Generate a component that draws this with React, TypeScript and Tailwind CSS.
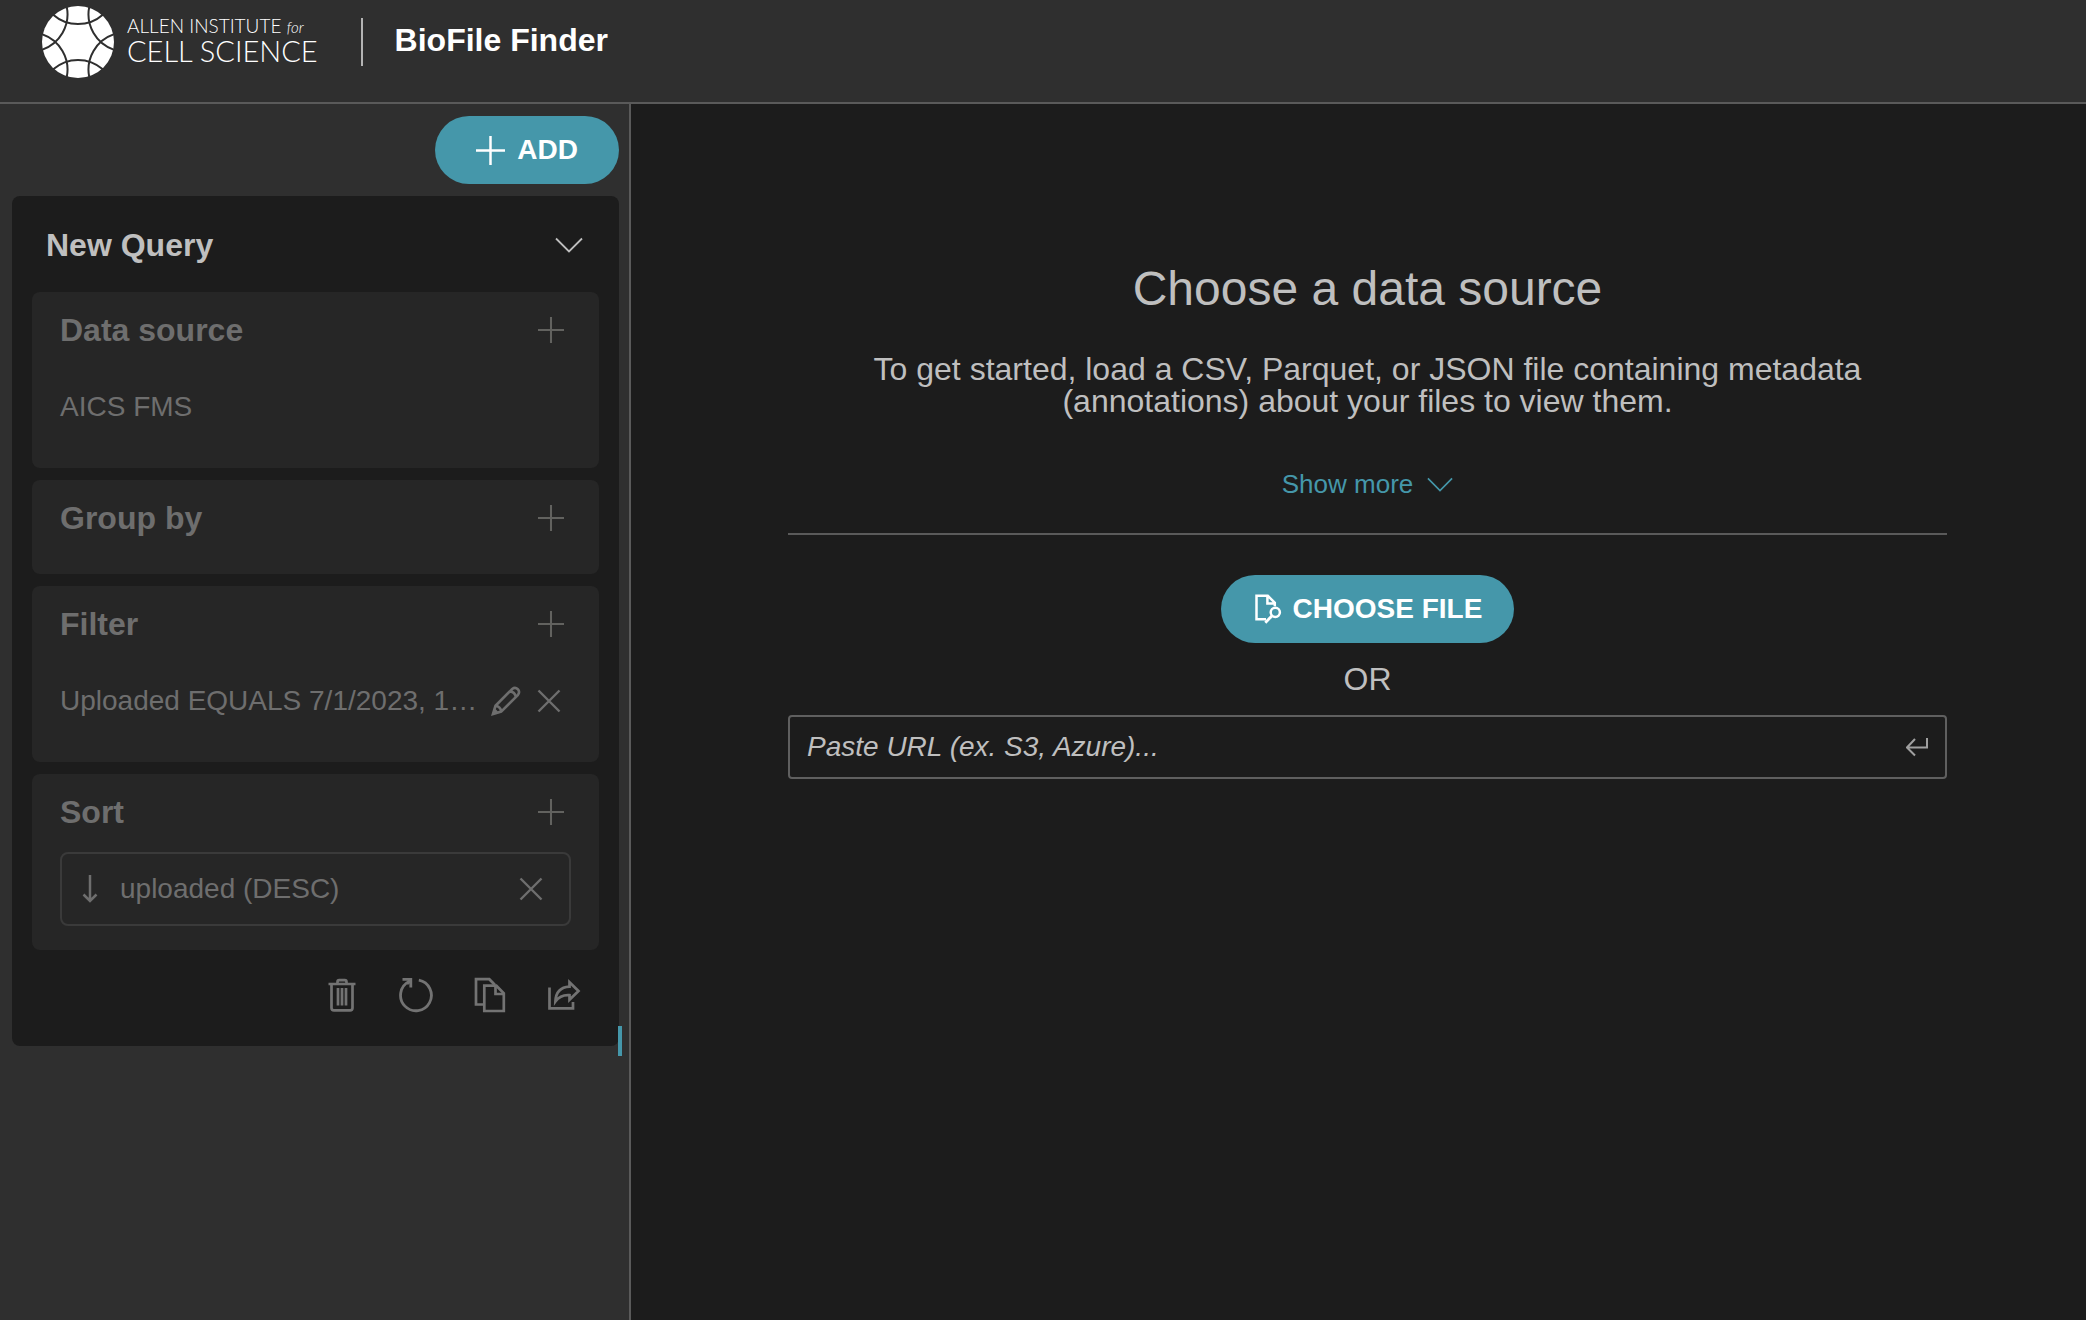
import React from "react";

type IconProps = { className?: string };

function Plus({ className }: IconProps) {
  return (
    <svg viewBox="0 0 28 28" className={className} fill="none" stroke="currentColor" aria-hidden="true">
      <path d="M14 0V28M0 14H28" />
    </svg>
  );
}

function Chevron({ className }: IconProps) {
  return (
    <svg viewBox="0 0 28 16" className={className} fill="none" stroke="currentColor" strokeWidth="1.8" aria-hidden="true">
      <path d="M1 1.5L14 14.5L27 1.5" />
    </svg>
  );
}

function Cross({ className }: IconProps) {
  return (
    <svg viewBox="0 0 24 24" className={className} fill="none" stroke="currentColor" strokeWidth="2.4" aria-hidden="true">
      <path d="M1.5 1.5L22.5 22.5M22.5 1.5L1.5 22.5" />
    </svg>
  );
}

function Pencil({ className }: IconProps) {
  return (
    <svg viewBox="0 0 30 30" className={className} fill="none" stroke="currentColor" strokeWidth="2.6" aria-hidden="true">
      <path d="M2 28L4.5 19.8L21.2 3Q24.2 0.8 26.8 3.2Q29.2 5.8 27 8.8L10.2 25.6L2 28ZM4.5 19.8Q9.5 20.5 10.2 25.6M19.2 5.4Q23.8 6 24.8 10.8" />
      <path d="M1 29L2.8 22.8Q6.6 23.6 7.2 27.2Z" fill="currentColor" stroke="none" />
    </svg>
  );
}

function ArrowDown({ className }: IconProps) {
  return (
    <svg viewBox="0 0 16 28" className={className} fill="none" stroke="currentColor" strokeWidth="2.5" aria-hidden="true">
      <path d="M8 0V26M1.5 19.5L8 26L14.5 19.5" />
    </svg>
  );
}

function Trash({ className }: IconProps) {
  return (
    <svg viewBox="0 0 28 34" className={className} fill="none" stroke="currentColor" strokeWidth="2.7" aria-hidden="true">
      <path d="M0.5 6H27.5M9.5 6V4Q9.5 2.2 11.2 2.2H16.8Q18.5 2.2 18.5 4V6M3.5 6V30Q3.5 32.3 6 32.3H22Q24.5 32.3 24.5 30V6M10 10V27.5M14 10V27.5M18 10V27.5" />
    </svg>
  );
}

function Refresh({ className }: IconProps) {
  return (
    <svg viewBox="0 0 36 36" className={className} fill="none" stroke="currentColor" strokeWidth="2.8" aria-hidden="true">
      <path d="M21.8 3.2A15.4 15.4 0 1 1 12 4.6" />
      <path d="M5.5 2.4H13.8V10.5M13.8 2.4L10 7" />
    </svg>
  );
}

function Copy({ className }: IconProps) {
  return (
    <svg viewBox="0 0 32 36" className={className} fill="none" stroke="currentColor" strokeWidth="2.7" aria-hidden="true">
      <path d="M10.3 27.5H2V2.2H15.3L21 8" />
      <path d="M10.3 8.7H22.3L29.8 16.2V34H10.3Z" />
      <path d="M21.5 8V17H30.5" />
    </svg>
  );
}

function Share({ className }: IconProps) {
  return (
    <svg viewBox="0 0 34 34" className={className} fill="none" stroke="currentColor" strokeWidth="2.7" aria-hidden="true">
      <path d="M2.5 9.5V30.3H26V24" />
      <path d="M22.5 4.2L31.5 13L22.5 21.8V17.2Q13.5 16.5 8.4 23.5Q9 9.5 22.5 8.7Z" />
    </svg>
  );
}

function FileSearch({ className }: IconProps) {
  return (
    <svg viewBox="0 0 27 30" className={className} fill="none" stroke="currentColor" strokeWidth="2.5" aria-hidden="true">
      <path d="M11 25.3H1.5V1.7H12.8L19.8 8.7V12.3M12.4 1.7V9.4H20.5" />
      <circle cx="20.3" cy="18.3" r="4.6" />
      <path d="M17 21.8L10.3 28.8" strokeWidth="2.8" />
    </svg>
  );
}

function Enter({ className }: IconProps) {
  return (
    <svg viewBox="0 0 22 20" className={className} fill="none" stroke="currentColor" strokeWidth="2" aria-hidden="true">
      <path d="M21 1V10.5H1.5M9 2L1 10.5L9 18.5" />
    </svg>
  );
}

function LogoMark({ className }: IconProps) {
  return (
    <svg viewBox="-36 -36 72 72" className={className} aria-hidden="true">
      <circle r="36" fill="#fff" />
      <g fill="none" stroke="#2f2f2f" strokeWidth="2">
        {[0, 60, 120, 180, 240, 300].map((angle) => (
          <path key={angle} transform={`rotate(${angle})`} d="M-24.8 -27.3A37.5 37.5 0 0 0 24.8 -27.3" />
        ))}
      </g>
    </svg>
  );
}

function QueryPart({ title, children }: { title: string; children?: React.ReactNode }) {
  return (
    <section className="rounded-lg bg-[#262626] px-7 pt-[18px] pb-6 text-[#6e6e6e]">
      <div className="flex items-center justify-between pr-[7px]">
        <h3 className="text-[32px] leading-10 font-bold">{title}</h3>
        <button type="button" aria-label={`Add ${title}`}>
          <Plus className="size-[26px] text-[#62625f] [stroke-width:2.2]" />
        </button>
      </div>
      <div className="mt-3">{children}</div>
    </section>
  );
}

function Header() {
  return (
    <header className="flex items-center border-b-2 border-[#5a5a5a] bg-[#2f2f2f] pt-1.5 pb-6 pl-[42px]">
      <a href="#" className="flex items-center gap-[13px] text-white">
        <LogoMark className="size-[72px]" />
        <span className="flex flex-col pb-1 font-['Lato',sans-serif] font-light whitespace-nowrap">
          <span className="text-[19px] leading-5">
            ALLEN INSTITUTE <i className="text-[15px]">for</i>
          </span>
          <span className="text-[29px] leading-7">CELL SCIENCE</span>
        </span>
      </a>
      <div className="ml-[43px] h-12 w-0.5 bg-[#b4b4b4]" />
      <h1 className="ml-8 pb-1 text-[32px] leading-10 font-bold text-white">BioFile Finder</h1>
    </header>
  );
}

function Sidebar() {
  return (
    <aside className="relative w-[631px] shrink-0 border-r-2 border-[#5a5a5a] bg-[#2f2f2f] py-3 pr-2.5 pl-3">
      <div className="flex justify-end">
        <button
          type="button"
          className="flex h-[68px] items-center gap-3 rounded-full bg-[#4597aa] px-[41px] text-[28px] font-bold text-white"
        >
          <Plus className="size-[29px] [stroke-width:2.4]" />
          ADD
        </button>
      </div>
      <div className="relative mt-3 rounded-lg bg-[#1c1c1c] px-5">
        <div className="flex items-center justify-between pt-[29px] pr-4 pb-[27px] pl-3.5 text-[#bfbfbf]">
          <h2 className="text-[32px] leading-10 font-bold">New Query</h2>
          <button type="button" aria-label="Collapse query">
            <Chevron className="h-4 w-7" />
          </button>
        </div>
        <div className="flex flex-col gap-3">
          <QueryPart title="Data source">
            <div className="mt-5 flex h-[74px] items-center text-[28px]">AICS FMS</div>
          </QueryPart>
          <QueryPart title="Group by" />
          <QueryPart title="Filter">
            <div className="mt-5 flex h-[74px] items-center pr-2.5 text-[28px]">
              <span className="grow truncate">Uploaded EQUALS 7/1/2023, 1…</span>
              <button type="button" aria-label="Edit filter" className="mr-4">
                <Pencil className="size-[30px]" />
              </button>
              <button type="button" aria-label="Remove filter">
                <Cross className="size-6" />
              </button>
            </div>
          </QueryPart>
          <QueryPart title="Sort">
            <div className="mt-5 flex h-[74px] items-center rounded-lg border-2 border-[#3a3a3a] pr-[26px] pl-5 text-[28px]">
              <ArrowDown className="h-7 w-4" />
              <span className="ml-[22px] grow">uploaded (DESC)</span>
              <button type="button" aria-label="Remove sort">
                <Cross className="size-6" />
              </button>
            </div>
          </QueryPart>
        </div>
        <div className="flex h-24 items-center justify-end gap-[41px] pr-[18px] pb-1.5 text-[#737373]">
          <button type="button" aria-label="Delete query">
            <Trash className="h-[34px] w-7" />
          </button>
          <button type="button" aria-label="Reset query">
            <Refresh className="size-9" />
          </button>
          <button type="button" aria-label="Duplicate query">
            <Copy className="h-9 w-8" />
          </button>
          <button type="button" aria-label="Share query">
            <Share className="size-[34px]" />
          </button>
        </div>
        <div className="absolute -right-[3px] -bottom-2.5 h-[30px] w-1 bg-[#4597aa]" />
      </div>
    </aside>
  );
}

function DataSourcePrompt() {
  return (
    <main className="flex grow flex-col items-center bg-[#1c1c1c] pt-[157px] pr-[139px] pl-[157px] text-[#bfbfbf]">
      <h2 className="text-5xl leading-14">Choose a data source</h2>
      <p className="mt-9 max-w-[1020px] text-center text-[32px] leading-8">
        To get started, load a CSV, Parquet, or JSON file containing metadata (annotations) about your files to view
        them.
      </p>
      <button type="button" className="mt-[51px] flex items-center gap-3.5 text-[26px] leading-8 text-[#4597aa]">
        Show more
        <Chevron className="h-[15px] w-[26px]" />
      </button>
      <hr className="mt-[33px] w-full border-t-2 border-[#5a5a5a]" />
      <button
        type="button"
        className="mt-10 flex h-[68px] items-center gap-[11px] rounded-full bg-[#4597aa] pr-8 pl-[34px] text-[28px] font-bold text-white"
      >
        <FileSearch className="h-[30px] w-[27px]" />
        CHOOSE FILE
      </button>
      <div className="mt-4 text-[32px] leading-10">OR</div>
      <form className="mt-4 flex h-16 w-full items-center rounded border-2 border-[#5f5f5f] pr-[17px] pl-[17px]">
        <input
          type="text"
          aria-label="Data source URL"
          placeholder="Paste URL (ex. S3, Azure)..."
          className="min-w-0 grow bg-transparent text-[28px] leading-10 outline-none placeholder:text-[#bfbfbf] placeholder:italic"
        />
        <button type="button" aria-label="Load URL" className="text-[#a0a0a0]">
          <Enter className="h-5 w-[22px]" />
        </button>
      </form>
    </main>
  );
}

export default function App() {
  return (
    <div className="flex min-h-screen flex-col bg-[#1c1c1c] font-['Liberation_Sans',Arial,sans-serif]">
      <Header />
      <div className="flex grow">
        <Sidebar />
        <DataSourcePrompt />
      </div>
    </div>
  );
}
